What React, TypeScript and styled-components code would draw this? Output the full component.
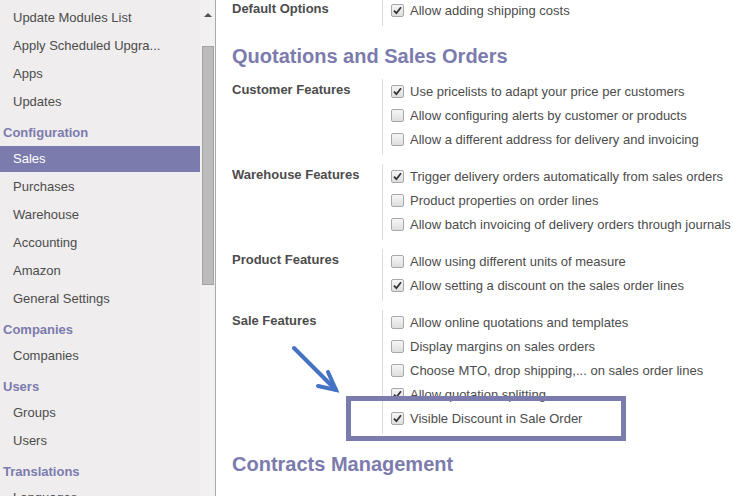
import React from "react";
import styled, { createGlobalStyle } from "styled-components";

const Global = createGlobalStyle`
  html, body { margin: 0; padding: 0; background: #fff; overflow: hidden; }
  body { font-family: "Liberation Sans", Arial, sans-serif; font-size: 13px; color: #4c4c4c; }
`;

const Page = styled.div`
  position: relative;
  display: flex;
  width: 733px;
  height: 496px;
  overflow: hidden;
  background: #fff;
`;

const Sidebar = styled.nav`
  width: 200px;
  flex: none;
  background: #efedee;
  padding-top: 4px;
  box-sizing: border-box;
  overflow: hidden;
`;

const Item = styled.div<{ $active?: boolean }>`
  height: 26px;
  padding: 1px 0;
  line-height: 26px;
  text-indent: 13px;
  white-space: nowrap;
  background-clip: content-box;
  color: ${(p) => (p.$active ? "#fff" : "#4c4c4c")};
  background-color: ${(p) => (p.$active ? "#7c7bad" : "transparent")};
`;

const GroupTitle = styled.div`
  height: 29px;
  padding-top: 5px;
  box-sizing: border-box;
  line-height: 24px;
  padding-left: 3px;
  font-weight: bold;
  color: #7c7bad;
`;

const ScrollTrack = styled.div`
  width: 15px;
  flex: none;
  background: #f1f1f1;
  border-right: 1px solid #aaaaaa;
  display: flex;
  flex-direction: column;
  align-items: center;
`;

const ArrowUp = styled.div`
  margin-top: 13px;
  width: 0;
  height: 0;
  border-left: 4px solid transparent;
  border-right: 4px solid transparent;
  border-bottom: 4px solid #505050;
`;

const Thumb = styled.div`
  margin-top: 29px;
  width: 10px;
  height: 237px;
  background: #bcbcbc;
  border: 1px solid #a3a3a3;
`;

const Content = styled.main`
  flex: 1;
  padding-left: 16px;
  overflow: hidden;
`;

const Scroller = styled.div`
  margin-top: -2px;
`;

const Group = styled.div`
  display: flex;
  margin-bottom: 9px;
`;

const Label = styled.div`
  width: 150px;
  flex: none;
  font-weight: bold;
  line-height: 22px;
  color: #4c4c4c;
`;

const Options = styled.div`
  border-left: 1px solid #dcdcdc;
  padding: 0 0 4px 8px;
`;

const OptionRow = styled.label`
  display: flex;
  align-items: center;
  gap: 6px;
  height: 24px;
  white-space: nowrap;
  color: #4c4c4c;
`;

const Box = styled.span`
  width: 11px;
  height: 11px;
  flex: none;
  border: 1px solid #a8a8a8;
  border-radius: 2px;
  background: linear-gradient(#f6f6f6, #dedede);
  display: flex;
  align-items: center;
  justify-content: center;
`;

const Heading = styled.h2`
  margin: 18px 0 11px;
  font-size: 20px;
  line-height: 24px;
  font-weight: bold;
  color: #7c7bad;
`;

const Para = styled.p`
  margin: 16px 0 0;
  line-height: 20px;
  color: #4c4c4c;
  white-space: nowrap;
`;

const Highlight = styled.div`
  position: absolute;
  left: 346px;
  top: 396px;
  width: 280px;
  height: 45px;
  box-sizing: border-box;
  border: 5px solid #7c7bad;
  pointer-events: none;
`;

const ArrowSvg = styled.svg`
  position: absolute;
  left: 285px;
  top: 340px;
  pointer-events: none;
`;

const Check = () => (
  <svg width="9" height="9" viewBox="0 0 9 9">
    <path d="M1 4.6 L3.4 7.2 L8 1.2" fill="none" stroke="#333" strokeWidth="1.8" />
  </svg>
);

type Opt = [string, boolean];

const Option = ({ text, checked }: { text: string; checked: boolean }) => (
  <OptionRow>
    <Box>{checked && <Check />}</Box>
    {text}
  </OptionRow>
);

const FeatureGroup = ({ label, opts }: { label: string; opts: Opt[] }) => (
  <Group>
    <Label>{label}</Label>
    <Options>
      {opts.map(([t, c]) => (
        <Option key={t} text={t} checked={c} />
      ))}
    </Options>
  </Group>
);

const nav: Array<[string, "title" | "item" | "active"]> = [
  ["Update Modules List", "item"],
  ["Apply Scheduled Upgra...", "item"],
  ["Apps", "item"],
  ["Updates", "item"],
  ["Configuration", "title"],
  ["Sales", "active"],
  ["Purchases", "item"],
  ["Warehouse", "item"],
  ["Accounting", "item"],
  ["Amazon", "item"],
  ["General Settings", "item"],
  ["Companies", "title"],
  ["Companies", "item"],
  ["Users", "title"],
  ["Groups", "item"],
  ["Users", "item"],
  ["Translations", "title"],
  ["Languages", "item"],
];

export default function App() {
  return (
    <Page>
      <Global />
      <Sidebar>
        {nav.map(([t, k], i) =>
          k === "title" ? (
            <GroupTitle key={i}>{t}</GroupTitle>
          ) : (
            <Item key={i} $active={k === "active"}>
              {t}
            </Item>
          )
        )}
      </Sidebar>
      <ScrollTrack>
        <ArrowUp />
        <Thumb />
      </ScrollTrack>
      <Content>
        <Scroller>
          <FeatureGroup label="Default Options" opts={[["Allow adding shipping costs", true]]} />
          <Heading>Quotations and Sales Orders</Heading>
          <FeatureGroup
            label="Customer Features"
            opts={[
              ["Use pricelists to adapt your price per customers", true],
              ["Allow configuring alerts by customer or products", false],
              ["Allow a different address for delivery and invoicing", false],
            ]}
          />
          <FeatureGroup
            label="Warehouse Features"
            opts={[
              ["Trigger delivery orders automatically from sales orders", true],
              ["Product properties on order lines", false],
              ["Allow batch invoicing of delivery orders through journals", false],
            ]}
          />
          <FeatureGroup
            label="Product Features"
            opts={[
              ["Allow using different units of measure", false],
              ["Allow setting a discount on the sales order lines", true],
            ]}
          />
          <FeatureGroup
            label="Sale Features"
            opts={[
              ["Allow online quotations and templates", false],
              ["Display margins on sales orders", false],
              ["Choose MTO, drop shipping,... on sales order lines", false],
              ["Allow quotation splitting", true],
              ["Visible Discount in Sale Order", true],
            ]}
          />
          <Heading>Contracts Management</Heading>
          <Para>
            You can use this module to manage your contracts and invoice them automatically or manually at the end of each period.
          </Para>
        </Scroller>
      </Content>
      <ArrowSvg width="60" height="60" viewBox="0 0 60 60">
        <g stroke="#4472c4" strokeWidth="4" strokeLinecap="round" fill="none">
          <path d="M9 8 L51 50" />
          <path d="M43 32 L51 50 L33 46" />
        </g>
      </ArrowSvg>
      <Highlight />
    </Page>
  );
}
